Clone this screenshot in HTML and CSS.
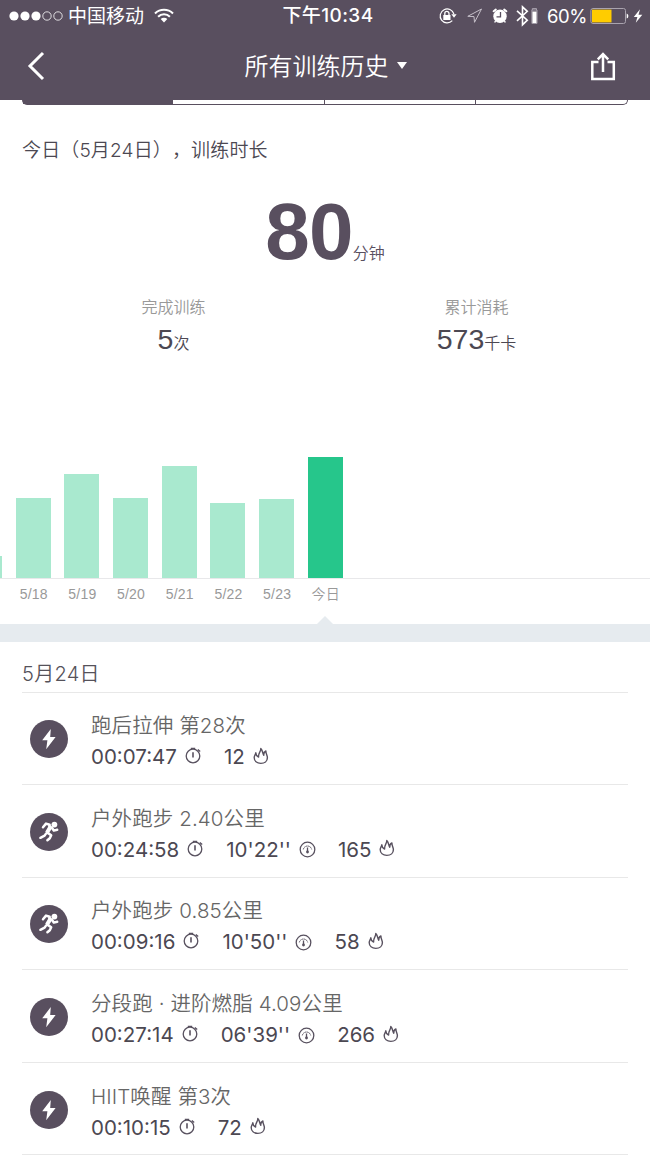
FILE: index.html
```
<!DOCTYPE html>
<html lang="zh-CN">
<head>
    <meta charset="UTF-8">
    <title>所有训练历史</title>
    <link rel="stylesheet" href="styles.css">
</head>
<body>
<!--图标-->
<svg class="sprite" width="0" height="0">
    <symbol id="i-flash" viewBox="0 0 38 38">
        <path d="M20.8 9L12.2 20.3H17.4L16.2 29.3L25.6 17.1H20.2Z" fill="#fff"/>
    </symbol>
    <symbol id="i-run" viewBox="0 0 38 38">
        <circle cx="24.4" cy="11.6" r="2.9" fill="#fff"/>
        <path d="M13 14.2L16 10.6L19.6 11.8M22 14.8L23.8 17.6L27.2 16.8M17 19.4L21.2 22.2L19.8 25.2L17.4 27.2M10.4 24.8L14.6 22.6L16 20.6" fill="none" stroke="#fff" stroke-width="2.5" stroke-linecap="round" stroke-linejoin="round"/>
        <path d="M18.6 10.6L22.8 14.2L18.8 20.2L15.2 18.8L18 14Z" fill="#fff"/>
    </symbol>
    <symbol id="i-time" viewBox="0 0 17 17">
        <g fill="none" stroke="#58515f" stroke-width="1.3">
            <circle cx="8" cy="9" r="6.8"/>
            <path d="M8 5.2V10.6" stroke-width="1.6"/>
            <path d="M5.8 1.3H10.2M12.8 2.4L15.2 4.6"/>
        </g>
    </symbol>
    <symbol id="i-pace" viewBox="0 0 17 17">
        <g fill="none" stroke="#58515f" stroke-width="1.3">
            <circle cx="8.5" cy="8.5" r="7.3"/>
            <path d="M4.3 8.4A4.3 4.3 0 0 1 12.7 8.4" stroke-width="1" stroke-dasharray="1.6 .5"/>
            <path d="M8.5 6.5V11"/>
        </g>
        <circle cx="8.5" cy="11" r="1.4" fill="#58515f"/>
    </symbol>
    <symbol id="i-fire" viewBox="0 0 16 18">
        <path d="M2.8 5.8C2.6 7.4 1.2 8.6 1.2 10.6C1.2 14 4 16.4 7.8 16.4C11.8 16.4 14.4 14 14.4 10.4C14.4 8.2 12.8 6.8 12.9 4C11.2 4.8 10.6 6.4 10.8 8.2C9.4 6.6 10 3.6 7.8 1.5C8 4.8 5.2 5.8 5.6 10C3.8 9.2 2.8 7.6 2.8 5.8Z" fill="none" stroke="#58515f" stroke-width="1.4" stroke-linejoin="round"/>
    </symbol>
</svg>

<div class="header">
    <div class="status">
        <div class="carrier">
            <svg width="54" height="12" viewBox="0 0 54 12">
                <g fill="#fff"><circle cx="5" cy="6" r="4.6"/><circle cx="16" cy="6" r="4.6"/><circle cx="27" cy="6" r="4.6"/></g>
                <g fill="none" stroke="#fff" stroke-width=".8"><circle cx="38" cy="6" r="4.2"/><circle cx="49" cy="6" r="4.2"/></g>
            </svg>
            <span>中国移动</span>
            <svg class="wifi" width="20" height="15" viewBox="0 0 20 15">
                <g fill="none" stroke="#fff" stroke-width="2.1"><path d="M1 5.4A13 13 0 0 1 19 5.4M4.1 8.7A8.4 8.4 0 0 1 15.9 8.7"/></g>
                <path d="M6.7 11A4.7 4.7 0 0 1 13.3 11L10 14.4Z" fill="#fff"/>
            </svg>
        </div>
        <div class="clock">下午10:34</div>
        <div class="tray">
            <svg width="103" height="24" viewBox="438 4 103 24">
                <!--旋转锁-->
                <path d="M453.9 14A7 7 0 1 0 452.3 20.7" fill="none" stroke="#fff" stroke-width="1.2"/>
                <path d="M451.4 14.2H456.6L454 17.8Z" fill="#fff"/>
                <path d="M443.3 15H450.5V20H443.3Z" fill="#fff"/>
                <path d="M444.8 15V13.5A2.1 2.1 0 0 1 449 13.5V15" fill="none" stroke="#fff" stroke-width="1.3"/>
                <!--定位-->
                <path d="M481.5 9L467.8 16.3L474 16.6L474.5 22.3Z" fill="none" stroke="#c5bfc9" stroke-width="1"/>
                <!--闹钟-->
                <circle cx="500" cy="16.3" r="6.7" fill="#fff"/>
                <path d="M493.6 11.2L495.8 9.6M506.4 11.2L504.2 9.6" stroke="#fff" stroke-width="2" stroke-linecap="round"/>
                <path d="M495.5 21L494.7 22.5M504.5 21L505.3 22.5" stroke="#fff" stroke-width="1.5"/>
                <path d="M500.5 12V16.8H496.5" fill="none" stroke="#594f5f" stroke-width="1.3"/>
                <!--蓝牙-->
                <path d="M517 10.8L527.3 20.2L522.5 24.8V6.8L527.3 11.3L517 20.8" fill="none" stroke="#fff" stroke-width="1.6"/>
                <path d="M532.3 10V8.6H536.5V10M531.9 10H537V23.4H531.9Z" fill="none" stroke="#aaa4af" stroke-width="1"/>
                <path d="M532.4 11.5H536.5V23H532.4Z" fill="#fff"/>
            </svg>
            <span class="percent">60%</span>
            <svg width="54" height="20" viewBox="590 6 54 20">
                <rect x="590.9" y="8.5" width="34.6" height="15" rx="2" fill="none" stroke="#a9a3ae" stroke-width="1"/>
                <path d="M592 9.6H611.5V22.4H592Z" fill="#ffcc00"/>
                <path d="M626.7 13.5Q628.4 14 628.4 16Q628.4 18 626.7 18.5Z" fill="#fff"/>
                <path d="M640 9.2L633.8 16.9H637.4L635.8 22.8L642.3 14.8H638.5Z" fill="#fff"/>
            </svg>
        </div>
    </div>
    <div class="nav">
        <svg width="20" height="30" viewBox="0 0 20 30"><path d="M17 2L4 15L17 28" fill="none" stroke="#fff" stroke-width="3"/></svg>
        <div class="title">所有训练历史<i class="caret"></i></div>
        <svg width="26" height="30" viewBox="0 0 26 30">
            <path d="M8.5 11.1H2.3V28H23.8V11.1H17.5M13 21V3M7.8 8.3L13 3L18.2 8.3" fill="none" stroke="#fff" stroke-width="2.5"/>
        </svg>
    </div>
</div>

<div class="tabs">
    <span class="current"></span>
    <span></span>
    <span></span>
    <span></span>
</div>

<div class="summary">
    <p class="date">今日（5月24日），训练时长</p>
    <div class="total"><b>80</b><span>分钟</span></div>
    <div class="counts">
        <div class="count">
            <h4>完成训练</h4>
            <p><b>5</b>次</p>
        </div>
        <div class="count">
            <h4>累计消耗</h4>
            <p><b>573</b>千卡</p>
        </div>
    </div>
</div>

<div class="chart">
    <div class="bars">
        <span style="height: 22px"></span>
        <span style="height: 80px"></span>
        <span style="height: 104px"></span>
        <span style="height: 80px"></span>
        <span style="height: 112px"></span>
        <span style="height: 75px"></span>
        <span style="height: 79px"></span>
        <span class="current" style="height: 121px"></span>
    </div>
    <div class="labels">
        <span></span>
        <span>5/18</span>
        <span>5/19</span>
        <span>5/20</span>
        <span>5/21</span>
        <span>5/22</span>
        <span>5/23</span>
        <span>今日</span>
    </div>
</div>
<div class="band"></div>

<div class="history">
    <h3>5月24日</h3>
    <ul>
        <li>
            <svg class="badge"><use href="#i-flash"/></svg>
            <div class="info">
                <h4>跑后拉伸 第28次</h4>
                <p>
                    <span>00:07:47<svg class="time"><use href="#i-time"/></svg></span>
                    <span>12<svg class="fire"><use href="#i-fire"/></svg></span>
                </p>
            </div>
        </li>
        <li>
            <svg class="badge"><use href="#i-run"/></svg>
            <div class="info">
                <h4>户外跑步 2.40公里</h4>
                <p>
                    <span>00:24:58<svg class="time"><use href="#i-time"/></svg></span>
                    <span>10'22''<svg class="pace"><use href="#i-pace"/></svg></span>
                    <span>165<svg class="fire"><use href="#i-fire"/></svg></span>
                </p>
            </div>
        </li>
        <li>
            <svg class="badge"><use href="#i-run"/></svg>
            <div class="info">
                <h4>户外跑步 0.85公里</h4>
                <p>
                    <span>00:09:16<svg class="time"><use href="#i-time"/></svg></span>
                    <span>10'50''<svg class="pace"><use href="#i-pace"/></svg></span>
                    <span>58<svg class="fire"><use href="#i-fire"/></svg></span>
                </p>
            </div>
        </li>
        <li>
            <svg class="badge"><use href="#i-flash"/></svg>
            <div class="info">
                <h4>分段跑 · 进阶燃脂 4.09公里</h4>
                <p>
                    <span>00:27:14<svg class="time"><use href="#i-time"/></svg></span>
                    <span>06'39''<svg class="pace"><use href="#i-pace"/></svg></span>
                    <span>266<svg class="fire"><use href="#i-fire"/></svg></span>
                </p>
            </div>
        </li>
        <li>
            <svg class="badge"><use href="#i-flash"/></svg>
            <div class="info">
                <h4>HIIT唤醒 第3次</h4>
                <p>
                    <span>00:10:15<svg class="time"><use href="#i-time"/></svg></span>
                    <span>72<svg class="fire"><use href="#i-fire"/></svg></span>
                </p>
            </div>
        </li>
    </ul>
</div>
</body>
</html>
```
FILE: styles.css
```
*{
    margin: 0;
    padding: 0;
    box-sizing: border-box;
}

body{
    width: 650px;
    height: 1156px;
    overflow: hidden;
    background-color: #ffffff;
    color: #4c4852;
    font-family: Inter, "Noto Sans CJK SC", sans-serif;
    font-weight: 350;
    text-spacing-trim: space-all;
}
ul{
    list-style: none;
}
svg{
    display: block;
    flex-shrink: 0;
}
.sprite{
    position: absolute;
}

.header{
    height: 100px;
    background-color: #594f5f;
    color: #ffffff;
}
.status{
    display: grid;
    grid-template-columns: 1fr auto 1fr;
    align-items: center;
    height: 32px;
    padding: 0 6px 0 9px;
}
.carrier{
    display: flex;
    align-items: center;
    height: 32px;
    font-size: 19px;
    font-weight: 400;
    line-height: 32px;
}
.carrier span{
    padding-top: 2px;
    margin-left: 5px;
}
.wifi{
    margin: 0 0 2px 10px;
}
.clock{
    padding-left: 3px;
    font-size: 19px;
    font-weight: 500;
    letter-spacing: 0.4px;
    line-height: 32px;
}
.tray{
    display: flex;
    align-items: center;
    justify-content: flex-end;
    height: 32px;
}
.percent{
    width: 49px;
    padding-left: 6px;
    font-size: 18.5px;
    font-weight: 400;
    letter-spacing: -0.5px;
}
.nav{
    display: flex;
    align-items: center;
    justify-content: space-between;
    height: 68px;
    padding: 0 34px 0 26px;
}
.title{
    display: flex;
    align-items: center;
    padding: 0 0 4px 15px;
    font-size: 24px;
}
.caret{
    margin: 3px 0 0 8px;
    border: 5px solid transparent;
    border-top: 7px solid #ffffff;
    border-bottom: 0;
}

.tabs{
    display: grid;
    grid-template-columns: 149.5px 152.5px 151px 1fr;
    height: 5px;
    margin: 0 22px;
    border: 1.5px solid #594f5f;
    border-bottom-width: 1px;
    border-top: 0;
    border-radius: 0 0 5px 5px;
}
.tabs span{
    border-right: 1.5px solid #594f5f;
}
.tabs span:last-child{
    border-right: 0;
}
.tabs .current{
    background-color: #594f5f;
}

.summary{
    height: 345px;
    padding-top: 32px;
}
.date{
    padding-left: 22px;
    font-size: 19px;
    letter-spacing: 0.15px;
    line-height: 28px;
}
.total{
    display: flex;
    align-items: baseline;
    justify-content: center;
    height: 116px;
    margin-top: 17px;
    color: #594f5f;
}
.total b{
    font-family: "Liberation Sans", sans-serif;
    font-size: 80px;
    font-weight: 700;
    letter-spacing: -0.8px;
    line-height: 100px;
}
.total span{
    font-size: 16px;
}
.counts{
    display: flex;
}
.count{
    width: 303px;
    text-align: center;
}
.count:first-child{
    margin-left: 22px;
}
.count h4{
    color: #999999;
    font-size: 16px;
    font-weight: 350;
    line-height: 18px;
}
.count p{
    font-size: 16px;
    line-height: 46px;
}
.count b{
    font-family: "Liberation Sans", sans-serif;
    font-size: 28.5px;
    font-weight: 400;
}

.chart{
    height: 174px;
    overflow: hidden;
}
.bars,
.labels{
    display: flex;
    gap: 13.7px;
    margin-left: -33px;
}
.bars{
    align-items: flex-end;
    height: 128px;
}
.bars span{
    width: 35px;
    background-color: #a9e9cf;
}
.bars .current{
    background-color: #26c68b;
}
.labels{
    border-top: 1px solid #e8e8ea;
}
.labels span{
    width: 36px;
    margin-right: -1px;
    color: #999999;
    font-family: "Liberation Sans", "Noto Sans CJK SC", sans-serif;
    font-size: 14px;
    letter-spacing: 0.2px;
    line-height: 30px;
    text-align: center;
}
.band{
    position: relative;
    height: 18px;
    background-color: #e6ebef;
}
.band::before{
    content: "";
    position: absolute;
    left: 317px;
    top: -8px;
    border: 8px solid transparent;
    border-top: 0;
    border-bottom-color: #e6ebef;
}

.history{
    margin: 0 22px;
}
.history h3{
    height: 50.5px;
    padding-top: 17px;
    border-bottom: 1px solid #e8e8e8;
    color: #55525a;
    font-size: 20px;
    font-weight: 350;
    letter-spacing: 0.3px;
    line-height: 30px;
}
.history li{
    display: flex;
    align-items: center;
    height: 92.6px;
    padding: 2px 0 0 8px;
    border-bottom: 1px solid #e8e8e8;
}
.badge{
    width: 38px;
    height: 38px;
    border-radius: 50%;
    background-color: #594f5f;
}
.info{
    padding-top: 4px;
    margin-left: 23px;
}
.info h4{
    color: #666666;
    font-size: 20.5px;
    font-weight: 350;
    letter-spacing: 0.1px;
    line-height: 31px;
}
.info p{
    display: flex;
    gap: 22px;
    color: #4c4852;
    font-size: 20.5px;
    font-weight: 400;
    line-height: 31px;
}
.info p span{
    display: flex;
    align-items: center;
}
.time,
.pace{
    width: 17px;
    height: 17px;
    margin: 0 0 2px 8px;
}
.pace{
    margin: 1px 0 0 8px;
}
.fire{
    width: 16px;
    height: 18px;
    margin: 0 0 2px 8px;
}
```
